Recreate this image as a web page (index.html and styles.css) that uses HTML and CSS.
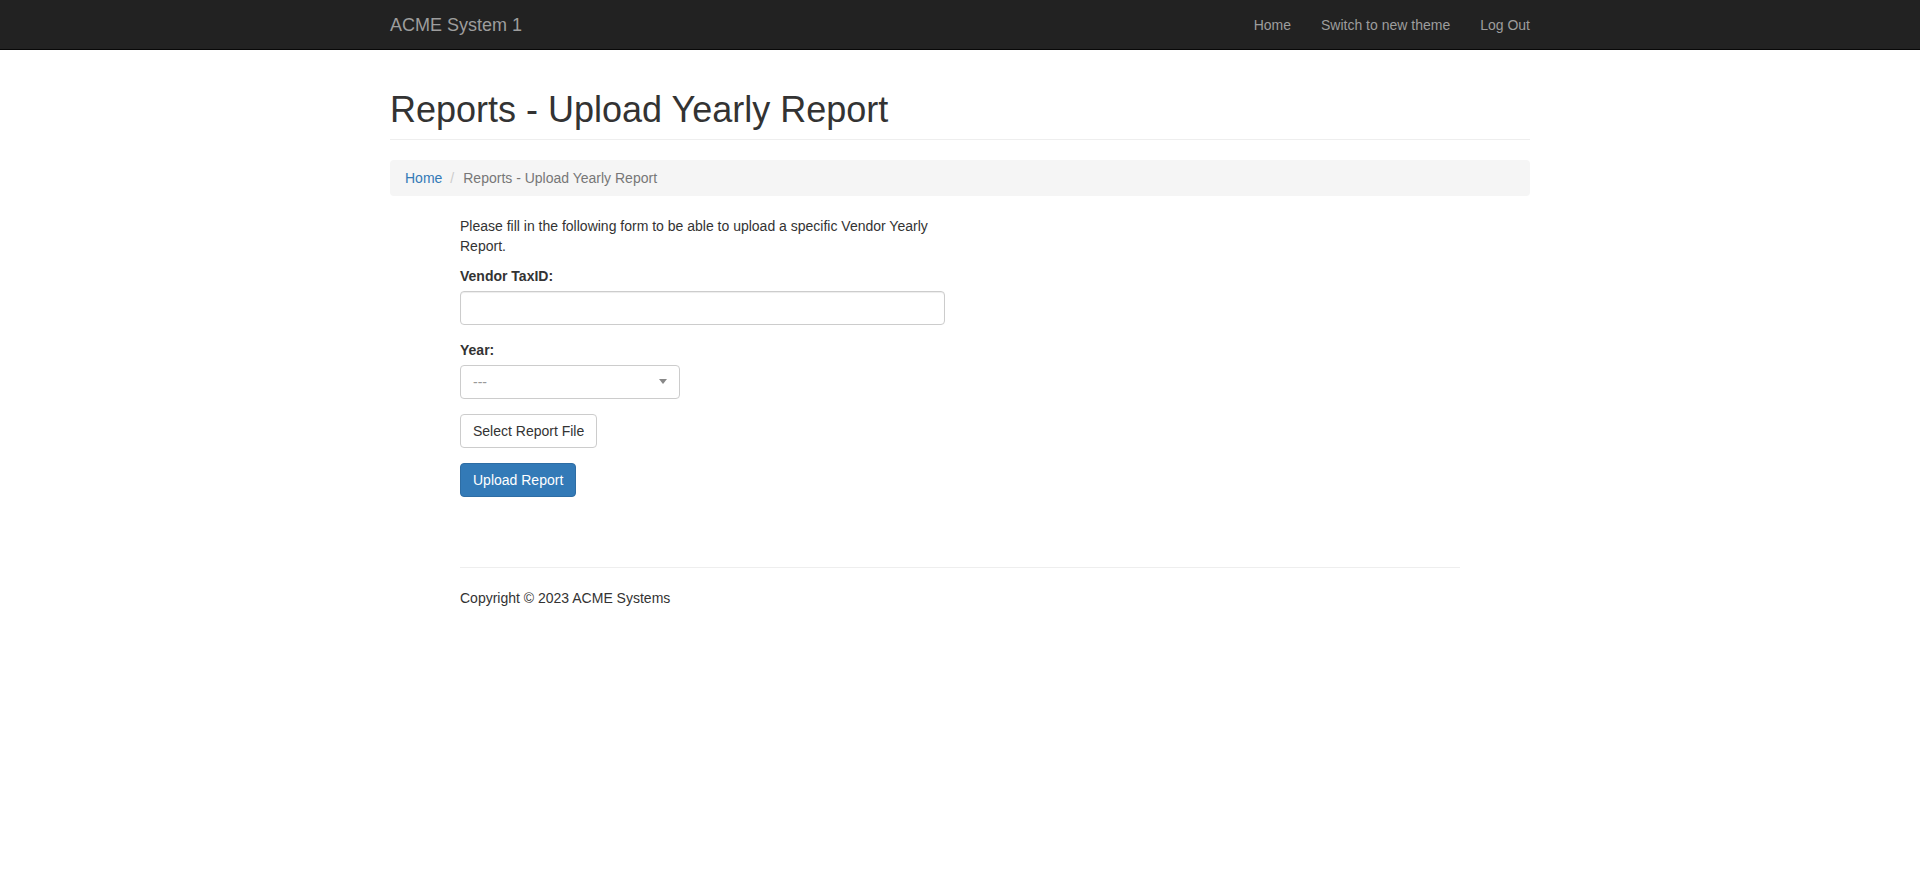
FILE: index.html
```html
<!DOCTYPE html>
<html lang="en">
<head>
<meta charset="utf-8">
<title>Reports - Upload Yearly Report</title>
<link rel="stylesheet" href="styles.css">
</head>
<body>
<nav class="navbar">
  <div class="container navbar-inner">
    <a class="brand" href="#">ACME System 1</a>
    <ul class="nav">
      <li><a href="#">Home</a></li>
      <li><a href="#">Switch to new theme</a></li>
      <li><a href="#">Log Out</a></li>
    </ul>
  </div>
</nav>

<div class="container">
  <div class="page-header">
    <h1>Reports - Upload Yearly Report</h1>
  </div>
  <ol class="breadcrumb">
    <li><a href="#">Home</a></li>
    <li class="sep">/</li>
    <li class="active">Reports - Upload Yearly Report</li>
  </ol>
</div>

<div class="body-content">
  <div class="form-col">
    <p class="intro">Please fill in the following form to be able to upload a specific Vendor Yearly Report.</p>
    <div class="form-group">
      <label class="label">Vendor TaxID:</label>
      <input class="form-control" type="text">
    </div>
    <div class="form-group">
      <label class="label">Year:</label>
      <div class="select">
        <span class="placeholder">---</span>
        <span class="arrow"></span>
      </div>
    </div>
    <div class="form-group">
      <button class="btn btn-default" type="button">Select Report File</button>
    </div>
    <div class="form-group">
      <button class="btn btn-primary" type="button">Upload Report</button>
    </div>
  </div>
  <hr class="rule">
  <footer class="footer">
    <p>Copyright &copy; 2023 ACME Systems</p>
  </footer>
</div>
</body>
</html>
```

FILE: styles.css
```css
* { box-sizing: border-box; }

html, body {
  margin: 0;
  padding: 0;
  background: #fff;
}

body {
  font-family: "Liberation Sans", Arial, Helvetica, sans-serif;
  font-size: 14px;
  line-height: 20px;
  color: #333;
}

a { text-decoration: none; }

.container {
  width: 1170px;
  margin: 0 auto;
  padding: 0 15px;
}

/* navbar */
.navbar {
  background: #222;
  border-bottom: 1px solid #080808;
  height: 50px;
}

.navbar-inner {
  display: flex;
  justify-content: space-between;
  align-items: flex-start;
}

.brand {
  font-size: 18px;
  line-height: 20px;
  padding: 15px 0;
  color: #9d9d9d;
}

.nav {
  list-style: none;
  margin: 0 -15px 0 0;
  padding: 0;
  display: flex;
}

.nav a {
  display: block;
  padding: 15px;
  line-height: 20px;
  color: #9d9d9d;
}

/* header */
.page-header {
  margin-top: 40px;
  padding-bottom: 9px;
  border-bottom: 1px solid #eee;
}

.page-header h1 {
  margin: 0;
  font-size: 36px;
  line-height: 39.6px;
  font-weight: 500;
  color: #333;
}

.breadcrumb {
  list-style: none;
  margin: 20px 0 20px;
  padding: 8px 15px;
  background: #f5f5f5;
  border-radius: 4px;
  display: flex;
}

.breadcrumb a { color: #337ab7; }

.breadcrumb .sep {
  color: #ccc;
  padding: 0 5px 0 8px;
  margin-right: 4px;
}

.breadcrumb .active { color: #777; }

/* body */
.body-content {
  width: 1030px;
  margin: 0 auto;
  padding: 0 15px;
}

.form-col {
  width: 485px;
}

.intro {
  margin: 0 0 10px;
}

.form-group {
  margin-bottom: 15px;
}

.label {
  display: inline-block;
  font-weight: bold;
  margin-bottom: 5px;
}

.form-control {
  display: block;
  width: 100%;
  height: 34px;
  padding: 6px 12px;
  font: inherit;
  color: #555;
  background: #fff;
  border: 1px solid #ccc;
  border-radius: 4px;
  box-shadow: inset 0 1px 1px rgba(0, 0, 0, 0.075);
}

.select {
  width: 220px;
  height: 34px;
  border: 1px solid #ccc;
  border-radius: 4px;
  background: #fff;
  display: flex;
  align-items: center;
  justify-content: space-between;
  padding: 0 12px 0 12px;
}

.placeholder {
  color: #999;
  font-size: 14px;
}

.arrow {
  width: 0;
  height: 0;
  border-style: solid;
  border-width: 5px 4px 0 4px;
  border-color: #888 transparent transparent transparent;
}

.btn {
  display: inline-block;
  height: 34px;
  padding: 6px 12px;
  font: inherit;
  line-height: 20px;
  border: 1px solid transparent;
  border-radius: 4px;
  cursor: pointer;
}

.btn-default {
  color: #333;
  background: #fff;
  border-color: #ccc;
}

.btn-primary {
  color: #fff;
  background: #337ab7;
  border-color: #2e6da4;
}

.rule {
  margin: 70px 0 20px;
  border: 0;
  border-top: 1px solid #eee;
}

.footer p {
  margin: 0 0 10px;
}
```
